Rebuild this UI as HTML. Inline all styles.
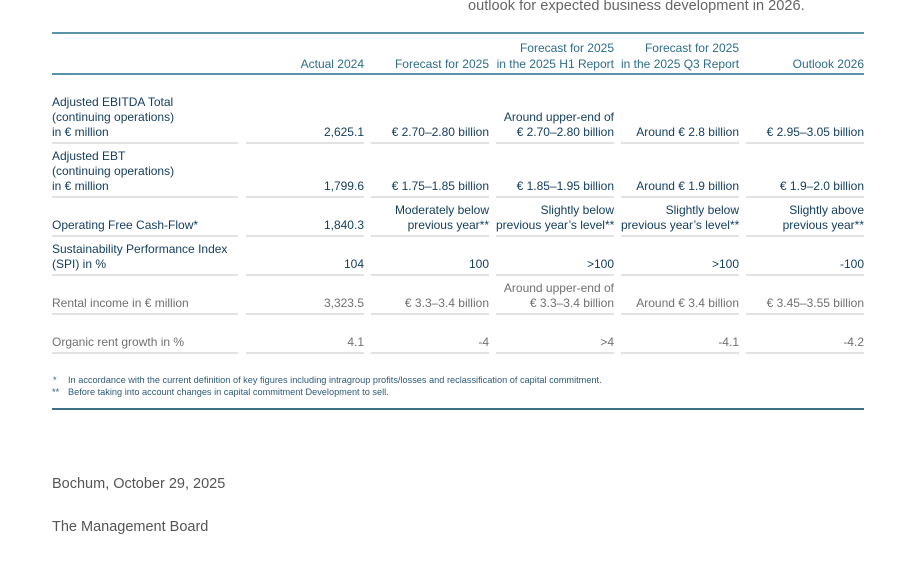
<!DOCTYPE html>
<html><head><meta charset="utf-8"><style>
body{margin:0;width:917px;height:562px;background:#fff;position:relative;overflow:hidden;font-family:"Liberation Sans",sans-serif;}
.a{position:absolute}
.c{position:absolute;display:flex;flex-direction:column;justify-content:flex-end;text-align:right;font-size:12px;line-height:15px;padding-bottom:3px;box-sizing:border-box;white-space:nowrap}
.hd{line-height:16px;padding-bottom:2px}
.l{text-align:left}
.d{color:#123c5e}
.g{color:#707070}
.h{color:#2d6c8c}
.ln{position:absolute;height:2px;background:#e2e2e2}
.t{position:absolute;height:2px;background:#5a94a8}
.fn{position:absolute;font-size:9.2px;color:#2d5a78;white-space:nowrap}
</style></head><body>
<div class="a" style="left:468px;top:-2px;font-size:14.6px;color:#666;white-space:nowrap">outlook for expected business development in 2026.</div>
<div class="t" style="left:52px;top:32px;width:812px"></div>
<div class="t" style="left:52px;top:73px;width:812px"></div>
<div id="tbl"></div>
<div class="fn" style="left:53px;top:375px">*</div>
<div class="fn" style="left:68px;top:375px">In accordance with the current definition of key figures including intragroup profits/losses and reclassification of capital commitment.</div>
<div class="fn" style="left:52px;top:387px">**</div>
<div class="fn" style="left:68px;top:387px">Before taking into account changes in capital commitment Development to sell.</div>
<div class="t" style="left:52px;top:408px;width:812px;height:1.5px;background:#3d6f85"></div>
<div class="a" style="left:52px;top:476px;font-size:14.5px;color:#555">Bochum, October 29, 2025</div>
<div class="a" style="left:52px;top:519px;font-size:14.5px;color:#555">The Management Board</div>
<script>
var cols=[[52,238],[246,364],[371,489],[496,614],[621,739],[746,864]];
var rows=[
[34,74,'h hd',['','Actual 2024','Forecast for 2025','Forecast for 2025<br>in the 2025 H1 Report','Forecast for 2025<br>in the 2025 Q3 Report','Outlook 2026'],0],
[75,143,'d',['Adjusted EBITDA Total<br>(continuing operations)<br>in € million','2,625.1','€ 2.70–2.80 billion','Around upper-end of<br>€ 2.70–2.80 billion','Around € 2.8 billion','€ 2.95–3.05 billion'],1],
[144,197,'d',['Adjusted EBT<br>(continuing operations)<br>in € million','1,799.6','€ 1.75–1.85 billion','€ 1.85–1.95 billion','Around € 1.9 billion','€ 1.9–2.0 billion'],1],
[197,236,'d',['Operating Free Cash-Flow*','1,840.3','Moderately below<br>previous year**','Slightly below<br>previous year’s level**','Slightly below<br>previous year’s level**','Slightly above<br>previous year**'],1],
[236,275,'d',['Sustainability Performance Index<br>(SPI) in %','104','100','>100','>100','-100'],1],
[275,314,'g',['Rental income in € million','3,323.5','€ 3.3–3.4 billion','Around upper-end of<br>€ 3.3–3.4 billion','Around € 3.4 billion','€ 3.45–3.55 billion'],1],
[314,353,'g',['Organic rent growth in %','4.1','-4','>4','-4.1','-4.2'],1]];
var h='';
rows.forEach(function(r){
 cols.forEach(function(c,i){
  h+='<div class="c '+r[2]+(i==0?' l':'')+'" style="left:'+c[0]+'px;width:'+(c[1]-c[0])+'px;top:'+r[0]+'px;height:'+(r[1]-r[0])+'px"><div>'+r[3][i]+'</div></div>';
  if(r[4])h+='<div class="ln" style="left:'+c[0]+'px;width:'+(c[1]-c[0])+'px;top:'+(r[1]-1)+'px"></div>';
 });
});
document.getElementById('tbl').innerHTML=h;
</script>
</body></html>
